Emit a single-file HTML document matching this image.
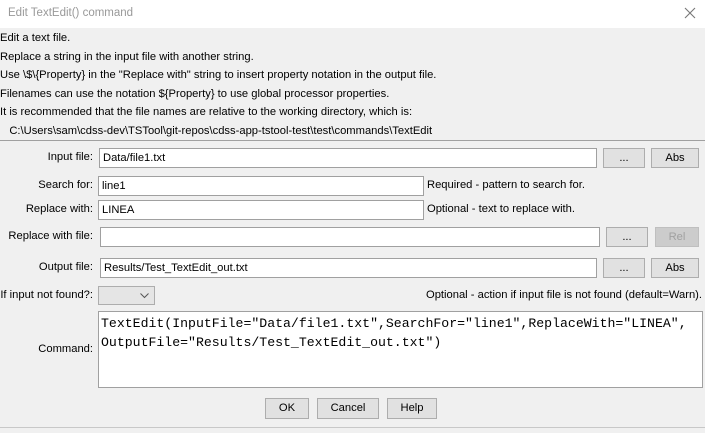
<!DOCTYPE html>
<html><head><style>
*{margin:0;padding:0;box-sizing:border-box}
body{width:705px;height:433px;background:#f0f0f0;font-family:"Liberation Sans",sans-serif;font-size:11.2px;color:#000;position:relative;overflow:hidden}
.a{position:absolute;white-space:nowrap}
.title{left:0;top:0;width:705px;height:28px;background:#fff}
.f{position:absolute;background:#fff;border:1px solid #a0a0a0;padding-left:3px;line-height:18px;font-size:11.2px}
.b{position:absolute;background:#e1e1e1;border:1px solid #adadad;text-align:center;line-height:18px;font-size:11.2px}
.l{position:absolute;text-align:right;right:612px;white-space:nowrap}
</style></head><body>
<div class="a title"></div>
<div class="a" style="left:8px;top:7px;color:#999;font-size:11.5px">Edit TextEdit() command</div>
<svg class="a" style="left:684px;top:7px" width="12" height="12"><path d="M1 1L11 11M11 1L1 11" stroke="#777" stroke-width="1.1"/></svg>
<div class="a" style="left:0;top:29px;line-height:18.5px">Edit a text file.<br>Replace a string in the input file with another string.<br>Use \$\{Property} in the "Replace with" string to insert property notation in the output file.<br>Filenames can use the notation ${Property} to use global processor properties.<br>It is recommended that the file names are relative to the working directory, which is:<br>&nbsp;&nbsp;&nbsp;C:\Users\sam\cdss-dev\TSTool\git-repos\cdss-app-tstool-test\test\commands\TextEdit</div>
<div class="a" style="left:0;top:140px;width:705px;height:1px;background:#a0a0a0"></div>

<div class="l" style="top:151px">Input file:</div>
<div class="f" style="left:99px;top:148px;width:498px;height:20px">Data/file1.txt</div>
<div class="b" style="left:603px;top:148px;width:42px;height:20px">...</div>
<div class="b" style="left:651px;top:148px;width:48px;height:20px">Abs</div>

<div class="l" style="top:179px">Search for:</div>
<div class="f" style="left:98px;top:176px;width:326px;height:20px">line1</div>
<div class="a" style="left:427px;top:179px">Required - pattern to search for.</div>

<div class="l" style="top:203px">Replace with:</div>
<div class="f" style="left:98px;top:200px;width:326px;height:20px">LINEA</div>
<div class="a" style="left:427px;top:203px">Optional - text to replace with.</div>

<div class="l" style="top:230px">Replace with file:</div>
<div class="f" style="left:100px;top:227px;width:500px;height:20px"></div>
<div class="b" style="left:606px;top:227px;width:42px;height:20px">...</div>
<div class="b" style="left:655px;top:227px;width:44px;height:20px;color:#a0a0a0;background:#ccc;border-color:#bfbfbf">Rel</div>

<div class="l" style="top:261px">Output file:</div>
<div class="f" style="left:100px;top:258px;width:497px;height:20px">Results/Test_TextEdit_out.txt</div>
<div class="b" style="left:603px;top:258px;width:42px;height:20px">...</div>
<div class="b" style="left:651px;top:258px;width:48px;height:20px">Abs</div>

<div class="l" style="top:289px">If input not found?:</div>
<div class="a" style="left:98px;top:286px;width:57px;height:19px;background:#e5e5e5;border:1px solid #adadad"></div>
<svg class="a" style="left:140px;top:293px" width="9" height="6"><path d="M0.5 0.5L4.5 4.5L8.5 0.5" stroke="#555" fill="none"/></svg>
<div class="a" style="right:3px;top:289px">Optional - action if input file is not found (default=Warn).</div>

<div class="l" style="top:343px">Command:</div>
<div class="f" style="left:98px;top:311px;width:605px;height:77px;font-family:'Liberation Mono',monospace;font-size:13.2px;line-height:19px;padding:2px 0 0 2px;white-space:pre">TextEdit(InputFile="Data/file1.txt",SearchFor="line1",ReplaceWith="LINEA",
OutputFile="Results/Test_TextEdit_out.txt")</div>

<div class="b" style="left:265px;top:398px;width:44px;height:21px">OK</div>
<div class="b" style="left:317px;top:398px;width:62px;height:21px">Cancel</div>
<div class="b" style="left:387px;top:398px;width:50px;height:21px">Help</div>
<div class="a" style="left:0;top:427px;width:705px;height:1px;background:#c8c8c8"></div>
</body></html>
